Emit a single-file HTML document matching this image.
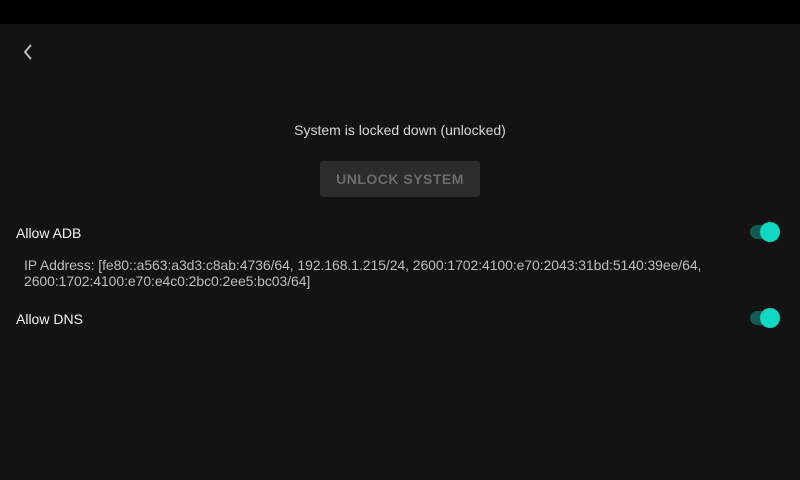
<!DOCTYPE html>
<html><head><meta charset="utf-8"><style>
html,body{margin:0;padding:0;width:800px;height:480px;overflow:hidden;background:#131313;font-family:"Liberation Sans",sans-serif;}
.top{position:absolute;left:0;top:0;width:800px;height:24px;background:#000;}
.t{position:absolute;white-space:nowrap;font-size:14px;}
.btn{position:absolute;left:320px;top:161px;width:160px;height:36px;background:#2c2c2c;border-radius:3px;color:#6b6b6b;font-weight:bold;font-size:14px;letter-spacing:0.5px;text-align:center;line-height:36px;}
.track{position:absolute;width:30px;height:14px;border-radius:7px;background:#135a53;}
.thumb{position:absolute;width:20px;height:20px;border-radius:10px;background:#10d8c3;}
</style></head><body>
<div class="top"></div>
<svg style="position:absolute;left:20px;top:43px" width="16" height="18"><path d="M11 2 L5 9 L11 16" stroke="#bdbdbd" stroke-width="2" fill="none"/></svg>
<div class="t" style="left:0;width:800px;text-align:center;top:122px;color:#d6d6d6;">System is locked down (unlocked)</div>
<div class="btn">UNLOCK SYSTEM</div>
<div class="t" style="left:16px;top:225px;color:#f2f2f2;">Allow ADB</div>
<div class="track" style="left:750px;top:225px"></div><div class="thumb" style="left:760px;top:222px"></div>
<div class="t" style="left:24px;top:257px;color:#bdbdbd;line-height:16px;letter-spacing:-0.08px;">IP Address: [fe80::a563:a3d3:c8ab:4736/64, 192.168.1.215/24, 2600:1702:4100:e70:2043:31bd:5140:39ee/64,<br>2600:1702:4100:e70:e4c0:2bc0:2ee5:bc03/64]</div>
<div class="t" style="left:16px;top:311px;color:#f2f2f2;">Allow DNS</div>
<div class="track" style="left:750px;top:311px"></div><div class="thumb" style="left:760px;top:308px"></div>
</body></html>
